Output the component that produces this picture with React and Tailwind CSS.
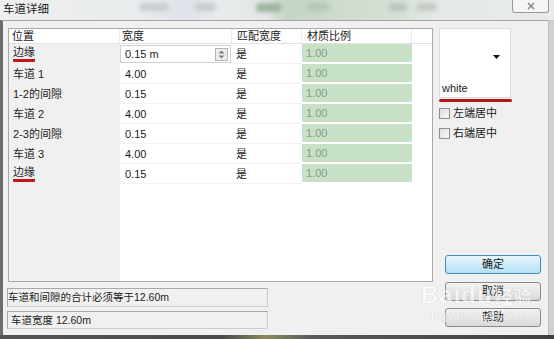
import React from 'react';

const rows = [
  { pos: '边缘', w: '0.15 m', mark: true, edit: true },
  { pos: '车道 1', w: '4.00' },
  { pos: '1-2的间隙', w: '0.15' },
  { pos: '车道 2', w: '4.00' },
  { pos: '2-3的间隙', w: '0.15' },
  { pos: '车道 3', w: '4.00' },
  { pos: '边缘', w: '0.15', mark: true },
];

function Spinner() {
  return (
    <div className="w-[13px] h-[13px] mr-[2px] border border-[#b5b5b5] bg-[#ececec] flex flex-col items-center justify-center gap-[1px]">
      <svg width="7" height="4" viewBox="0 0 7 4"><path d="M0.5 3.5 L3.5 0.5 L6.5 3.5 Z" fill="#7a7a7a" /></svg>
      <svg width="7" height="4" viewBox="0 0 7 4"><path d="M0.5 0.5 L3.5 3.5 L6.5 0.5 Z" fill="#7a7a7a" /></svg>
    </div>
  );
}

function Check({ label }) {
  return (
    <div className="flex items-center gap-[3px] h-[14px]">
      <div className="w-[11px] h-[11px] border border-[#8e8f8f] bg-gradient-to-br from-[#dcdcdc] to-[#fafafa]" />
      <span className="text-[11px] leading-[14px]">{label}</span>
    </div>
  );
}

function Button({ children, primary }) {
  return (
    <div
      className={`w-[96px] h-[19px] rounded-[3px] border flex items-center justify-center text-[11px] leading-none ${
        primary
          ? 'border-[#3c8fc0] bg-gradient-to-b from-[#e6f6fd] to-[#b4e0f4]'
          : 'border-[#8a8a8a] bg-gradient-to-b from-[#f3f3f3] to-[#d9d9d9]'
      }`}
    >
      {children}
    </div>
  );
}

export default function App() {
  return (
    <div className="w-[554px] h-[339px] overflow-hidden bg-[#4d4d4d] flex flex-col text-[11px] text-[#1c1c1c] font-['Liberation_Sans','Noto_Sans_CJK_SC',sans-serif]">
      {/* title bar */}
      <div className="h-[20px] flex bg-[linear-gradient(90deg,#eef0ef_0%,#e9ecec_25%,#dfe3ea_33%,#e8ebeb_40%,#e2e7e3_48%,#c3d5c4_52%,#cfdccf_62%,#d6e0d6_72%,#e3e8e5_78%,#e8ebea_100%)]">
        <span className="pl-[3px] pt-[3px] text-[11.5px] leading-[13px] text-[#222]">车道详细</span>
        <div className="ml-[90px] mt-[3px] w-[30px] h-[8px] rounded bg-[#c9ccd3] blur-[2px]" />
        <div className="ml-[25px] mt-[3px] w-[22px] h-[8px] rounded bg-[#c8cbd0] blur-[2px]" />
        <div className="ml-[40px] mt-[3px] w-[26px] h-[9px] rounded bg-[#9fb5a1] blur-[2px]" />
        <div className="ml-[25px] mt-[3px] w-[22px] h-[8px] rounded bg-[#b5c6b6] blur-[2px]" />
        <div className="ml-[60px] mt-[3px] w-[18px] h-[8px] rounded bg-[#b9c6bb] blur-[2px]" />
        <div className="ml-[10px] mt-[3px] w-[20px] h-[8px] rounded bg-[#c3ccc4] blur-[2px]" />
        <div className="ml-auto mr-[5px] w-[37px] h-[13px] rounded-b-[3px] border border-t-0 border-[#9a9a9a] bg-[#f5f5f5] flex items-center justify-center">
          <svg width="8" height="8" viewBox="0 0 8 8">
            <path d="M1 1 L7 7 M7 1 L1 7" stroke="#8a8a8a" strokeWidth="1.6" />
          </svg>
        </div>
      </div>

      {/* dialog body */}
      <div className="flex">
        <div className="relative w-[549px] h-[315px] flex bg-[#f0f0f0] border-l-[3px] border-l-[#6d6d6d] border-t border-t-[#a6a6a6] border-r border-r-[#bdbdbd]">
          {/* left column */}
          <div className="pl-[5px] pt-[7px] flex flex-col">
            <div className="w-[425px] h-[254px] border border-[#a8a8a8] bg-white flex flex-col">
              <div className="h-[15px] flex border-b border-[#e2e2e2] leading-[14px]">
                <div className="w-[111px] pl-[3px] border-r border-[#ececec]">位置</div>
                <div className="w-[112px] pl-[2px] border-r border-[#ececec]">宽度</div>
                <div className="w-[70px] pl-[5px] border-r border-[#ececec]">匹配宽度</div>
                <div className="w-[110px] pl-[5px] border-r border-[#ececec]">材质比例</div>
                <div className="flex-1" />
              </div>
              {rows.map((r, i) => (
                <div key={i} className="h-[20px] flex leading-[14px]">
                  <div className="w-[111px] bg-[#f0f0f0] pl-[4px] flex items-center">
                    {r.mark ? (
                      <span className="inline-block border-b-[3px] border-[#c2161b] rounded-[1px] leading-[13px]">{r.pos}</span>
                    ) : (
                      r.pos
                    )}
                  </div>
                  {r.edit ? (
                    <div className="w-[112px] flex items-center">
                      <div className="w-[111px] h-[18px] border border-[#c9d0d6] bg-white flex items-center pl-[4px]">
                        <span className="flex-1">{r.w}</span>
                        <Spinner />
                      </div>
                    </div>
                  ) : (
                    <div className="w-[112px] pl-[5px] flex items-center border-b border-[#f2f2f2]">{r.w}</div>
                  )}
                  <div className="w-[70px] pl-[4px] flex items-center border-b border-[#f2f2f2]">是</div>
                  <div className="w-[110px] pl-[4px] flex items-center bg-[#c6e1c5] border-b-2 border-white text-[#8a9c89]">1.00</div>
                  <div className="flex-1" />
                </div>
              ))}
              <div className="flex-1 flex">
                <div className="w-[111px] bg-[#f0f0f0]" />
              </div>
            </div>
            <div className="mt-[6px] -ml-[1px] w-[261px] h-[19px] border border-[#cbcbcb] border-t-[#a9a9a9] border-l-[#a9a9a9] flex items-center leading-none text-[10.5px]">
              车道和间隙的合计必须等于12.60m
            </div>
            <div className="mt-[4px] -ml-[1px] w-[261px] h-[18px] border border-[#cbcbcb] border-t-[#a9a9a9] border-l-[#a9a9a9] flex items-center pl-[3px] leading-none text-[10.5px]">
              车道宽度 12.60m
            </div>
          </div>

          {/* right column */}
          <div className="pl-[6px] pt-[7px] pb-[8px] flex flex-col">
            <div className="w-[72px] h-[70px] bg-white border border-[#dcdcdc] flex flex-col">
              <div className="flex-1 flex items-center justify-end pr-[10px] pt-[2px]">
                <svg width="7" height="4" viewBox="0 0 7 4"><path d="M0 0 L7 0 L3.5 4 Z" fill="#111" /></svg>
              </div>
              <div className="pl-[2px] pb-[2px] text-[11px] leading-[13px]">white</div>
            </div>
            <div className="mt-[1px] w-[73px] h-[3px] rounded-full bg-[#b3161a]" />
            <div className="mt-[4px] flex flex-col gap-[6px]">
              <Check label="左端居中" />
              <Check label="右端居中" />
            </div>
            <div className="mt-auto ml-[6px] flex flex-col">
              <Button primary>确定</Button>
              <div className="mt-[8px]"><Button>取消</Button></div>
              <div className="mt-[7px]"><Button>帮助</Button></div>
            </div>
          </div>

          {/* watermark */}
          <div className="absolute left-[418px] top-[262px] pointer-events-none flex flex-col items-center opacity-60">
            <div className="flex items-end text-white text-[24px] font-bold leading-none tracking-[1px] [text-shadow:0_0_1px_#9a9a9a]">
              <span>Bai</span>
              <span>du</span>
              <span className="text-[18px] ml-[2px]">经验</span>
            </div>
            <div className="text-white text-[12px] leading-none mt-[3px] [text-shadow:0_0_1px_#a0a0a0]">jingyan.baidu.com</div>
          </div>
        </div>
        <div className="w-[5px] h-[315px] bg-[#cfd0cf]" />
      </div>
      <div className="flex-1 bg-[linear-gradient(90deg,#555_0%,#4a4a4a_40%,#8c8a5a_48%,#5a5a5a_56%,#3f3f3f_100%)]" />
    </div>
  );
}
